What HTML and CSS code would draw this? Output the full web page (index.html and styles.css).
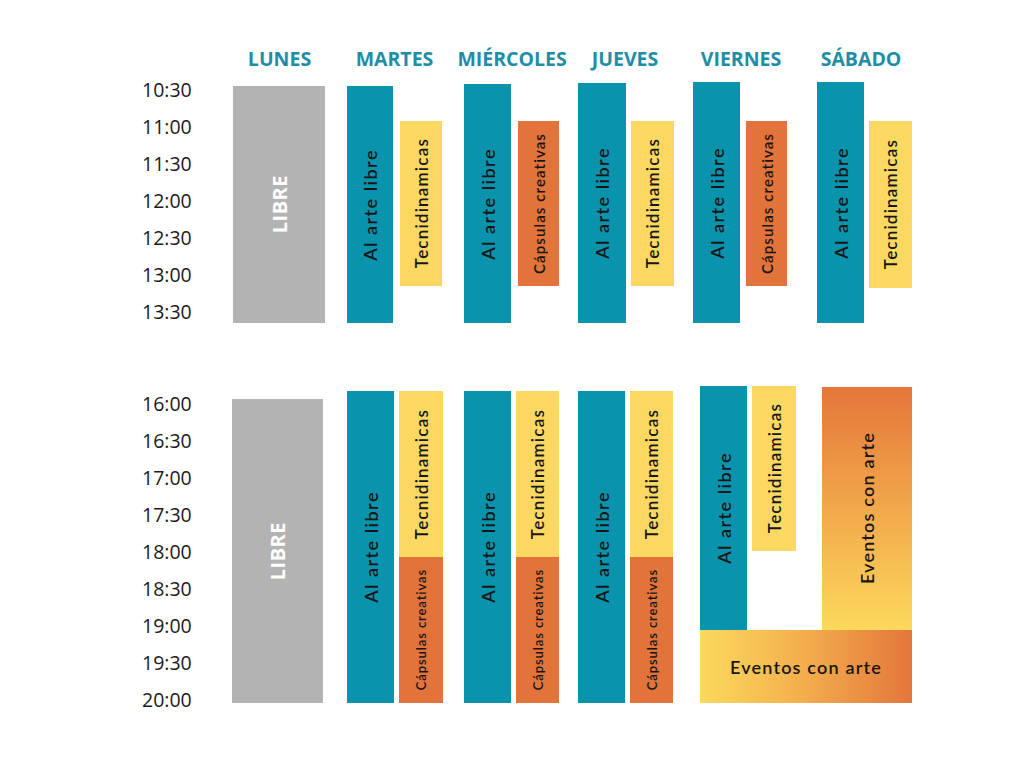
FILE: index.html
```html
<!DOCTYPE html>
<html lang="es">
<head>
<meta charset="utf-8">
<title>Horario</title>
<link rel="stylesheet" href="styles.css">
</head>
<body>
<main class="page">
  <header class="days">
    <div class="day d-lun">LUNES</div>
    <div class="day d-mar">MARTES</div>
    <div class="day d-mie">MIÉRCOLES</div>
    <div class="day d-jue">JUEVES</div>
    <div class="day d-vie">VIERNES</div>
    <div class="day d-sab">SÁBADO</div>
  </header>

  <section class="session morning">
    <ol class="times">
      <li>10:30</li><li>11:00</li><li>11:30</li><li>12:00</li><li>12:30</li><li>13:00</li><li>13:30</li>
    </ol>
    <div class="block gray m-lun"><span class="vt libre">LIBRE</span></div>
    <div class="block teal m-mar-a"><span class="vt t-arte">Al arte libre</span></div>
    <div class="block yellow m-mar-b"><span class="vt t-tec">Tecnidinamicas</span></div>
    <div class="block teal m-mie-a"><span class="vt t-arte">Al arte libre</span></div>
    <div class="block orange m-mie-b"><span class="vt t-cap">Cápsulas creativas</span></div>
    <div class="block teal m-jue-a"><span class="vt t-arte">Al arte libre</span></div>
    <div class="block yellow m-jue-b"><span class="vt t-tec">Tecnidinamicas</span></div>
    <div class="block teal m-vie-a"><span class="vt t-arte">Al arte libre</span></div>
    <div class="block orange m-vie-b"><span class="vt t-cap">Cápsulas creativas</span></div>
    <div class="block teal m-sab-a"><span class="vt t-arte">Al arte libre</span></div>
    <div class="block yellow m-sab-b"><span class="vt t-tec">Tecnidinamicas</span></div>
  </section>

  <section class="session afternoon">
    <ol class="times">
      <li>16:00</li><li>16:30</li><li>17:00</li><li>17:30</li><li>18:00</li><li>18:30</li><li>19:00</li><li>19:30</li><li>20:00</li>
    </ol>
    <div class="block gray a-lun"><span class="vt libre">LIBRE</span></div>
    <div class="block teal a-mar-a"><span class="vt t-arte">Al arte libre</span></div>
    <div class="block yellow a-mar-b"><span class="vt t-tec">Tecnidinamicas</span></div>
    <div class="block orange a-mar-c"><span class="vt t-cap-s">Cápsulas creativas</span></div>
    <div class="block teal a-mie-a"><span class="vt t-arte">Al arte libre</span></div>
    <div class="block yellow a-mie-b"><span class="vt t-tec">Tecnidinamicas</span></div>
    <div class="block orange a-mie-c"><span class="vt t-cap-s">Cápsulas creativas</span></div>
    <div class="block teal a-jue-a"><span class="vt t-arte">Al arte libre</span></div>
    <div class="block yellow a-jue-b"><span class="vt t-tec">Tecnidinamicas</span></div>
    <div class="block orange a-jue-c"><span class="vt t-cap-s">Cápsulas creativas</span></div>
    <div class="block teal a-vie-a"><span class="vt t-arte">Al arte libre</span></div>
    <div class="block yellow a-vie-b"><span class="vt t-tec">Tecnidinamicas</span></div>
    <div class="block grad-v a-sab"><span class="vt t-ev">Eventos con arte</span></div>
    <div class="block grad-h a-ev"><span class="t-ev">Eventos con arte</span></div>
  </section>
</main>
</body>
</html>
```

FILE: styles.css
```css
* { box-sizing: border-box; }
html, body { margin: 0; padding: 0; background: #ffffff; }
body { width: 1024px; height: 768px; overflow: hidden; font-family: "Open Sans", "Liberation Sans", sans-serif; color: #1b1b1b; }

.page { position: relative; width: 1024px; height: 768px; padding-top: 46px; }

/* day headers */
.days { display: flex; padding-left: 232px; height: 26px; }
.day { display: flex; justify-content: center; white-space: nowrap; font-weight: 700; font-size: 19.5px; line-height: 26px; color: #1e8ea6; }
.d-lun { width: 95px; }
.d-mar { width: 135px; }
.d-mie { width: 100px; }
.d-jue { width: 126px; }
.d-vie { width: 106px; }
.d-sab { width: 134px; }

/* sessions */
.session { position: relative; width: 1024px; }
.morning { height: 259px; }
.afternoon { height: 333px; margin-top: 55px; }

.times { list-style: none; margin: 0; padding: 0 0 0 142px; display: flex; flex-direction: column; }
.times li { height: 37px; line-height: 36px; font-size: 19.5px; color: #1b1b1b; }

/* blocks */
.block { position: absolute; display: flex; align-items: center; justify-content: center; overflow: visible; }
.gray { background: #b3b3b3; }
.teal { background: #0a93ad; }
.yellow { background: #fbd862; }
.orange { background: #e2733a; }
.grad-v { background: linear-gradient(180deg, #e4763a 0%, #f2a84b 50%, #fbd95c 100%); }
.grad-h { background: linear-gradient(90deg, #fbd95c 0%, #f4b24f 45%, #e4763a 100%); }

.vt { writing-mode: vertical-rl; transform: rotate(180deg); white-space: nowrap; }
.libre { font-family: "Open Sans", sans-serif; font-weight: 700; font-size: 20px; color: #ffffff; letter-spacing: 0.5px; }
.t-arte, .t-tec, .t-cap, .t-cap-s, .t-ev { font-family: "Lato", "Noto Sans", sans-serif; font-weight: 600; color: #161616; }
.t-arte { font-size: 18px; letter-spacing: 1.5px; }
.t-tec { font-size: 17px; letter-spacing: 1.2px; }
.t-cap { font-size: 15px; letter-spacing: 1.1px; }
.t-cap-s { font-size: 13px; letter-spacing: 0.9px; }
.t-ev { font-size: 18px; letter-spacing: 1.2px; white-space: nowrap; }

/* morning positions (relative to session top) */
.m-lun   { left: 233px; width: 92px; top: 14px; height: 237px; }
.m-mar-a { left: 347px; width: 46px; top: 14px; height: 237px; }
.m-mar-b { left: 400px; width: 42px; top: 49px; height: 165px; }
.m-mie-a { left: 464px; width: 47px; top: 12px; height: 239px; }
.m-mie-b { left: 518px; width: 41px; top: 49px; height: 165px; }
.m-jue-a { left: 578px; width: 48px; top: 11px; height: 240px; }
.m-jue-b { left: 631px; width: 43px; top: 49px; height: 165px; }
.m-vie-a { left: 693px; width: 47px; top: 10px; height: 241px; }
.m-vie-b { left: 746px; width: 41px; top: 49px; height: 165px; }
.m-sab-a { left: 817px; width: 47px; top: 10px; height: 241px; }
.m-sab-b { left: 869px; width: 43px; top: 49px; height: 167px; }

/* afternoon positions */
.a-lun   { left: 232px; width: 91px; top: 13px; height: 304px; }
.a-mar-a { left: 347px; width: 47px; top: 5px; height: 312px; }
.a-mar-b { left: 399px; width: 44px; top: 5px; height: 166px; }
.a-mar-c { left: 399px; width: 44px; top: 171px; height: 146px; }
.a-mie-a { left: 464px; width: 47px; top: 5px; height: 312px; }
.a-mie-b { left: 516px; width: 43px; top: 5px; height: 166px; }
.a-mie-c { left: 516px; width: 43px; top: 171px; height: 146px; }
.a-jue-a { left: 578px; width: 47px; top: 5px; height: 312px; }
.a-jue-b { left: 630px; width: 43px; top: 5px; height: 166px; }
.a-jue-c { left: 630px; width: 43px; top: 171px; height: 146px; }
.a-vie-a { left: 700px; width: 47px; top: 0; height: 244px; }
.a-vie-b { left: 752px; width: 44px; top: 0; height: 165px; }
.a-sab   { left: 822px; width: 90px; top: 1px; height: 243px; }
.a-ev    { left: 700px; width: 212px; top: 244px; height: 73px; }
```
